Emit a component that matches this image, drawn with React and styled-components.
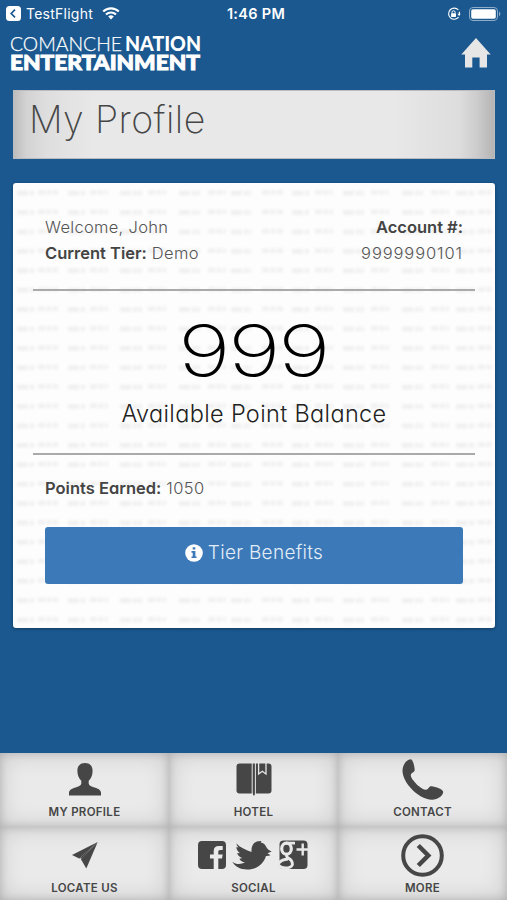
import React from "react";
import styled, { createGlobalStyle } from "styled-components";

const GlobalStyle = createGlobalStyle`
  * {
    box-sizing: border-box;
  }
  body {
    margin: 0;
    background: #1a588f;
    font-family: Inter, "Liberation Sans", sans-serif;
  }
`;

const navItems = [
  { label: "MY PROFILE", icons: [UserIcon] },
  { label: "HOTEL", icons: [BookIcon] },
  { label: "CONTACT", icons: [PhoneIcon] },
  { label: "LOCATE US", icons: [PlaneIcon] },
  { label: "SOCIAL", icons: [FacebookIcon, TwitterIcon, GooglePlusIcon] },
  { label: "MORE", icons: [MoreIcon] },
];

const App = () => {
  return (
    <Screen>
      <GlobalStyle />
      <StatusBar>
        <StatusSide>
          <BackIcon />
          <BackText>TestFlight</BackText>
          <WifiIcon />
        </StatusSide>
        <Clock>1:46 PM</Clock>
        <StatusSide $end>
          <LockIcon />
          <BatteryIcon />
        </StatusSide>
      </StatusBar>
      <Header>
        <Logo />
        <HomeIcon />
      </Header>
      <TitleBar>
        <h1>My Profile</h1>
      </TitleBar>
      <Card>
        <Texture />
        <Account>
          <InfoLine $spacing="0.3px">Welcome, John</InfoLine>
          <InfoLine>
            <b>Account #:</b>
          </InfoLine>
          <InfoLine $spacing="0.4px">
            <b>Current Tier:</b> Demo
          </InfoLine>
          <InfoLine $spacing="0.9px">9999990101</InfoLine>
        </Account>
        <Divider />
        <Balance>
          <Points>999</Points>
          <Caption>Available Point Balance</Caption>
        </Balance>
        <Divider />
        <Earned>
          <InfoLine $spacing="0.4px">
            <b>Points Earned:</b> 1050
          </InfoLine>
        </Earned>
        <BenefitsButton>
          <InfoIcon />
          <span>Tier Benefits</span>
        </BenefitsButton>
      </Card>
      <Nav>
        {navItems.map(({ label, icons }) => (
          <NavItem key={label}>
            <NavIcons>
              {icons.map((Icon, i) => (
                <Icon key={i} />
              ))}
            </NavIcons>
            <NavLabel>{label}</NavLabel>
          </NavItem>
        ))}
      </Nav>
    </Screen>
  );
};

function BackIcon() {
  return (
    <svg width="15" height="15" viewBox="0 0 15 15">
      <rect width="15" height="15" rx="3.5" fill="#fff" />
      <path d="M9 3.6 5.2 7.5 9 11.4" fill="none" stroke="#1a588f" strokeWidth="1.7" />
    </svg>
  );
}

function WifiIcon() {
  return (
    <svg width="18" height="13" viewBox="0 0 18 13">
      <g fill="none" stroke="#fff" strokeWidth="2.1">
        <path d="M1.2 4.6a11 11 0 0 1 15.6 0" />
        <path d="M4 7.5a7.1 7.1 0 0 1 10 0" />
      </g>
      <path d="M6.2 9.6a4 4 0 0 1 5.6 0L9 12.5z" fill="#fff" />
    </svg>
  );
}

function LockIcon() {
  return (
    <svg width="14" height="14" viewBox="0 0 14 14">
      <path
        d="M11.4 3A5.6 5.6 0 1 0 11.6 10.2M12.3 8.2A5.6 5.6 0 0 0 12.2 4.8"
        fill="none"
        stroke="#fff"
        strokeWidth="1.1"
      />
      <path d="m10.3 6.8 3.4 0-1.6 2.3z" fill="#fff" />
      <rect x="4.1" y="6.3" width="4.9" height="3.7" rx="0.4" fill="#fff" />
      <path d="M5 6.5V5.3a1.55 1.55 0 0 1 3.1 0v1.2" fill="none" stroke="#fff" />
    </svg>
  );
}

function BatteryIcon() {
  return (
    <svg width="32" height="14" viewBox="0 0 32 14">
      <rect x="0.5" y="0.5" width="28" height="13" rx="3.5" fill="none" stroke="#8fadc8" />
      <rect x="2.2" y="2.3" width="24.6" height="9.4" rx="1.8" fill="#fff" />
      <path d="M30 4.6c1.8.8 1.8 4 0 4.8z" fill="#8fadc8" />
    </svg>
  );
}

function Logo() {
  return (
    <LogoSvg width="194" height="48" viewBox="0 -4 194 48" fill="#fff">
      <g fontFamily="Lato, sans-serif" fontSize="20">
        <text x="0" y="18" fontWeight="300" stroke="#fff" strokeWidth="0.25" textLength="112" lengthAdjust="spacingAndGlyphs">
          COMANCHE
        </text>
        <text x="115" y="18" fontWeight="900" textLength="76" lengthAdjust="spacingAndGlyphs">
          NATION
        </text>
        <text
          x="0"
          y="37"
          fontWeight="900"
          stroke="#fff"
          strokeWidth="0.9"
          textLength="190"
          lengthAdjust="spacingAndGlyphs"
        >
          ENTERTAINMENT
        </text>
      </g>
    </LogoSvg>
  );
}

function HomeIcon() {
  return (
    <svg width="30" height="30" viewBox="0 0 30 30">
      <path d="M15 0 0.3 16.5H4V29.5H11.3V19.5H18.6V29.5H26V16.5H29.7Z" fill="#e6e6e6" />
    </svg>
  );
}

function InfoIcon() {
  return (
    <svg width="18" height="18" viewBox="0 0 18 18">
      <circle cx="9" cy="9" r="8.8" fill="#fff" />
      <path d="M7.7 3.3h2.6v2.3H7.7zM6.5 7.1h3.9v5.3h1.2v1.7H6.5v-1.7h1.2V8.8H6.5z" fill="#3b79b8" />
    </svg>
  );
}

function UserIcon() {
  return (
    <svg width="32" height="33" viewBox="0 0 32 33">
      <path d="M16 0c5 0 7.7 3.2 7.6 8-.1 4.5-1.6 7.8-3.9 9.8v2.7c.3 2.3 3 3 6 4.1 3.7 1.4 6.1 2.4 6.3 5.2V32.5H0v-2.7c.2-2.8 2.6-3.8 6.3-5.2 3-1.1 5.7-1.8 6-4.1v-2.7C10 15.8 8.5 12.5 8.4 8 8.3 3.2 11 0 16 0z" />
    </svg>
  );
}

function BookIcon() {
  return (
    <svg width="36" height="33" viewBox="0 0 36 33">
      <rect x="0.5" y="0.5" width="35" height="30" rx="3" />
      <path d="M16.2 0V31M19.4 0V31" stroke="#e6e6e6" strokeWidth="1" />
      <path d="M17.2 30h1.6v1.5L17.9 33l-.8-1.5z" />
      <path d="M22.6 0V11L26.3 8.2 30 11V0" fill="none" stroke="#e6e6e6" strokeWidth="1.3" />
    </svg>
  );
}

function PhoneIcon() {
  return (
    <svg width="42" height="41" viewBox="0 0 42 41">
      <path d="M8.5.3C11 .2 12.5 7 12.7 11c.1 2.4-3.8 2.9-3.9 5.2 0 2.8 4.5 7.9 7.8 10.9 3.4 2.9 6.3 4.3 8.2 3.5 2-.8 2-3.6 4.5-3.4 4.4.3 12 3 11.9 5.7-.2 3.9-5.7 7.7-10.9 7.8-7.3.2-15.3-5.1-20.9-11C3.3 23.5-.1 16 .6 10.3 1.2 5.3 4.7.5 8.5.3z" />
    </svg>
  );
}

function PlaneIcon() {
  return (
    <svg width="26" height="27" viewBox="0 0 26 27">
      <path d="M25.7 0 0 13 7.2 16.4z" />
      <path d="M25.7 0 8.8 17.1 14.3 26.5z" />
      <path d="M25.7 0 7.2 16.4 10 16z" />
    </svg>
  );
}

function FacebookIcon() {
  return (
    <svg width="28" height="28" viewBox="0 0 28 28">
      <path d="M4 0H24Q28 0 28 4V24Q28 28 24 28H20.3V17.5H24L24.7 13.5H20.3V10.5Q20.3 9 22 9H24.7V5H21Q15.7 5 15.7 10V13.5H12V17.5H15.7V28H4Q0 28 0 24V4Q0 0 4 0z" />
    </svg>
  );
}

function TwitterIcon() {
  return (
    <svg width="40" height="29" viewBox="0 0 40 29">
      <path d="M4.5 2.5C8 6.5 13 8.5 19.5 11 19 5 22 .9 26 .2L29.5 0 28.7 1.5Q32.5 2 34 5.5C35.5 8 36.5 9 39.7 10.6L35.5 12.3 38.5 14.2Q36.5 15 34 14.9C31.5 23 24.5 28.7 15 28.5 8.5 28.3 3.5 26 .2 20.7 4 23.5 8.5 23.7 13 21.5Q9 21 7.4 17.8L10.4 17.1Q6 15.5 5.2 12L8 12.2Q4.2 9.5 4.4 6L6.5 6.5Q4.3 4.5 4.5 2.5z" />
    </svg>
  );
}

function GooglePlusIcon() {
  return (
    <svg width="31" height="30" viewBox="0 0 31 30">
      <rect x="1.5" y="0.5" width="28" height="28.5" rx="4" />
      <g fill="none" stroke="#e8e8e8">
        <ellipse cx="8.5" cy="8.7" rx="4.8" ry="5.5" strokeWidth="3.2" />
        <path
          d="M8 3.2H17M9 14.5Q7.5 16.5 11 18.5T14.5 24.5Q13 28 8 28Q2 28 0 24Q3 19.5 10 19"
          strokeWidth="2.8"
        />
        <path d="M18.5 9.5H31M24.7 3.5V15.5" strokeWidth="2.4" />
      </g>
    </svg>
  );
}

function MoreIcon() {
  return (
    <svg width="43" height="43" viewBox="0 0 43 43">
      <g fill="none" stroke="#464646">
        <circle cx="21.5" cy="21.5" r="19.3" strokeWidth="4" />
        <path d="m17.3 11.5 10 10-10 10" strokeWidth="4.5" />
      </g>
    </svg>
  );
}

// faint watermark dashes, one row repeated down the card
const dashes = [
  [4, 18], [25, 20], [55, 17], [77, 18], [107, 22], [135, 18], [166, 21],
  [195, 18], [218, 20], [249, 21], [279, 17], [302, 18], [330, 21],
  [358, 18], [389, 21], [418, 18], [443, 19], [465, 15],
];

function Texture() {
  return (
    <TextureSvg width="482" height="445">
      <defs>
        <filter id="soften" filterUnits="userSpaceOnUse" x="0" y="0" width="482" height="20">
          <feGaussianBlur stdDeviation="1.6 1.3" />
        </filter>
        <pattern id="dashes" width="482" height="19.4" patternUnits="userSpaceOnUse">
          <g stroke="#efefef" filter="url(#soften)">
            {dashes.map(([x, w], i) => (
              <path
                key={x}
                d={`M${x} ${i % 2 ? 9.5 : 10}h${w}`}
                strokeWidth="4.5"
                strokeDasharray={i % 2 ? "7 1.5 5 1.5" : "11 2 4 1"}
              />
            ))}
          </g>
        </pattern>
      </defs>
      <rect width="482" height="445" fill="url(#dashes)" />
    </TextureSvg>
  );
}

const Screen = styled.div`
  width: 507px;
  height: 900px;
  display: flex;
  flex-direction: column;
  overflow: hidden;
  background: #1a588f;
`;

const StatusBar = styled.div`
  height: 28px;
  padding: 0 6px 1px 6px;
  display: grid;
  grid-template-columns: 1fr auto 1fr;
  align-items: center;
  color: #fff;
`;

const StatusSide = styled.div`
  display: flex;
  align-items: center;
  justify-content: ${(props) => (props.$end ? "flex-end" : "flex-start")};
  gap: ${(props) => (props.$end ? "8px" : "0")};
`;

const BackText = styled.span`
  font-size: 14px;
  letter-spacing: 0.25px;
  margin: 0 9px 0 5px;
`;

const Clock = styled.span`
  font-size: 14.5px;
  font-weight: 600;
  letter-spacing: 0.3px;
  padding-left: 5px;
`;

const Header = styled.div`
  height: 62px;
  padding: 5px 16px 0 10px;
  display: flex;
  justify-content: space-between;
  > svg:last-child {
    margin-top: 5px;
  }
`;

const LogoSvg = styled.svg`
  margin-top: -4px;
  overflow: visible;
`;

const TitleBar = styled.div`
  height: 69px;
  margin: 0 12px 0 13px;
  padding-left: 15px;
  border: 1px solid #b8bcc0;
  background: linear-gradient(
    90deg,
    #bcbcbc 0,
    #d2d2d2 12px,
    #dedede 32px,
    #e8e8e8 80px,
    #e8e8e8 380px,
    #dddddd 445px,
    #cccccc 463px,
    #b4b4b4 100%
  );
  h1 {
    margin: 0;
    color: #464646;
    font-size: 37.5px;
    font-weight: 250;
    line-height: 58px;
    letter-spacing: 0.4px;
  }
`;

const Card = styled.div`
  position: relative;
  height: 445px;
  margin: 24px 12px 0 13px;
  padding: 31px 20px 0;
  border-radius: 3px;
  background: #fdfdfd;
  box-shadow: 0 1px 3px rgba(0, 0, 0, 0.35);
  display: flex;
  flex-direction: column;
  font-feature-settings: "cv11";
  > * {
    position: relative;
  }
`;

const TextureSvg = styled.svg`
  && {
    position: absolute;
  }
  top: 0;
  left: 0;
`;

const Account = styled.div`
  height: 75px;
  padding: 0 12px;
  display: grid;
  grid-template-columns: 1fr auto;
  grid-auto-rows: 25.5px;
  > :nth-child(even) {
    text-align: right;
  }
`;

const InfoLine = styled.div`
  color: #555;
  font-size: 16.5px;
  font-weight: 300;
  line-height: 26px;
  letter-spacing: ${(props) => props.$spacing || 0};
  b {
    color: #444;
    font-weight: 630;
    letter-spacing: 0;
  }
`;

const Divider = styled.div`
  height: 2px;
  background: #aaa;
`;

const Balance = styled.div`
  height: 162px;
  padding-top: 22px;
  text-align: center;
  color: #000;
`;

const Points = styled.div`
  font-size: 71px;
  font-weight: 230;
  line-height: 74px;
  letter-spacing: -2px;
  transform: translateX(-1px) scaleX(1.27);
`;

const Caption = styled.div`
  font-size: 23.5px;
  font-weight: 300;
  line-height: 30px;
  margin-top: 12px;
  letter-spacing: 0.35px;
  color: #222;
`;

const Earned = styled.div`
  height: 72px;
  padding: 20px 12px 0;
`;

const BenefitsButton = styled.button`
  height: 57px;
  margin: 0 12px;
  padding: 0 0 6px;
  border: 0;
  border-radius: 3px;
  background: #3b79b8;
  color: #e3edf7;
  font-family: inherit;
  font-feature-settings: inherit;
  font-size: 19px;
  font-weight: 300;
  letter-spacing: 0.3px;
  display: flex;
  align-items: center;
  justify-content: center;
  gap: 5px;
`;

const Nav = styled.div`
  height: 147px;
  margin-top: auto;
  display: grid;
  grid-template-columns: repeat(3, 1fr);
  grid-template-rows: 74px 73px;
`;

const NavItem = styled.div`
  display: flex;
  flex-direction: column;
  align-items: center;
  background: #eaeaea;
  box-shadow: inset 0 0 24px rgba(0, 0, 0, 0.16), inset 0 0 9px rgba(0, 0, 0, 0.16);
  &:nth-child(n + 4) {
    padding-top: 2px;
  }
`;

const NavIcons = styled.div`
  height: 52px;
  display: flex;
  align-items: center;
  justify-content: center;
  gap: 6px;
  fill: #464646;
`;

const NavLabel = styled.div`
  color: #464646;
  font-size: 11.5px;
  font-weight: 600;
  line-height: 14px;
  letter-spacing: 0.3px;
`;

export default App;
